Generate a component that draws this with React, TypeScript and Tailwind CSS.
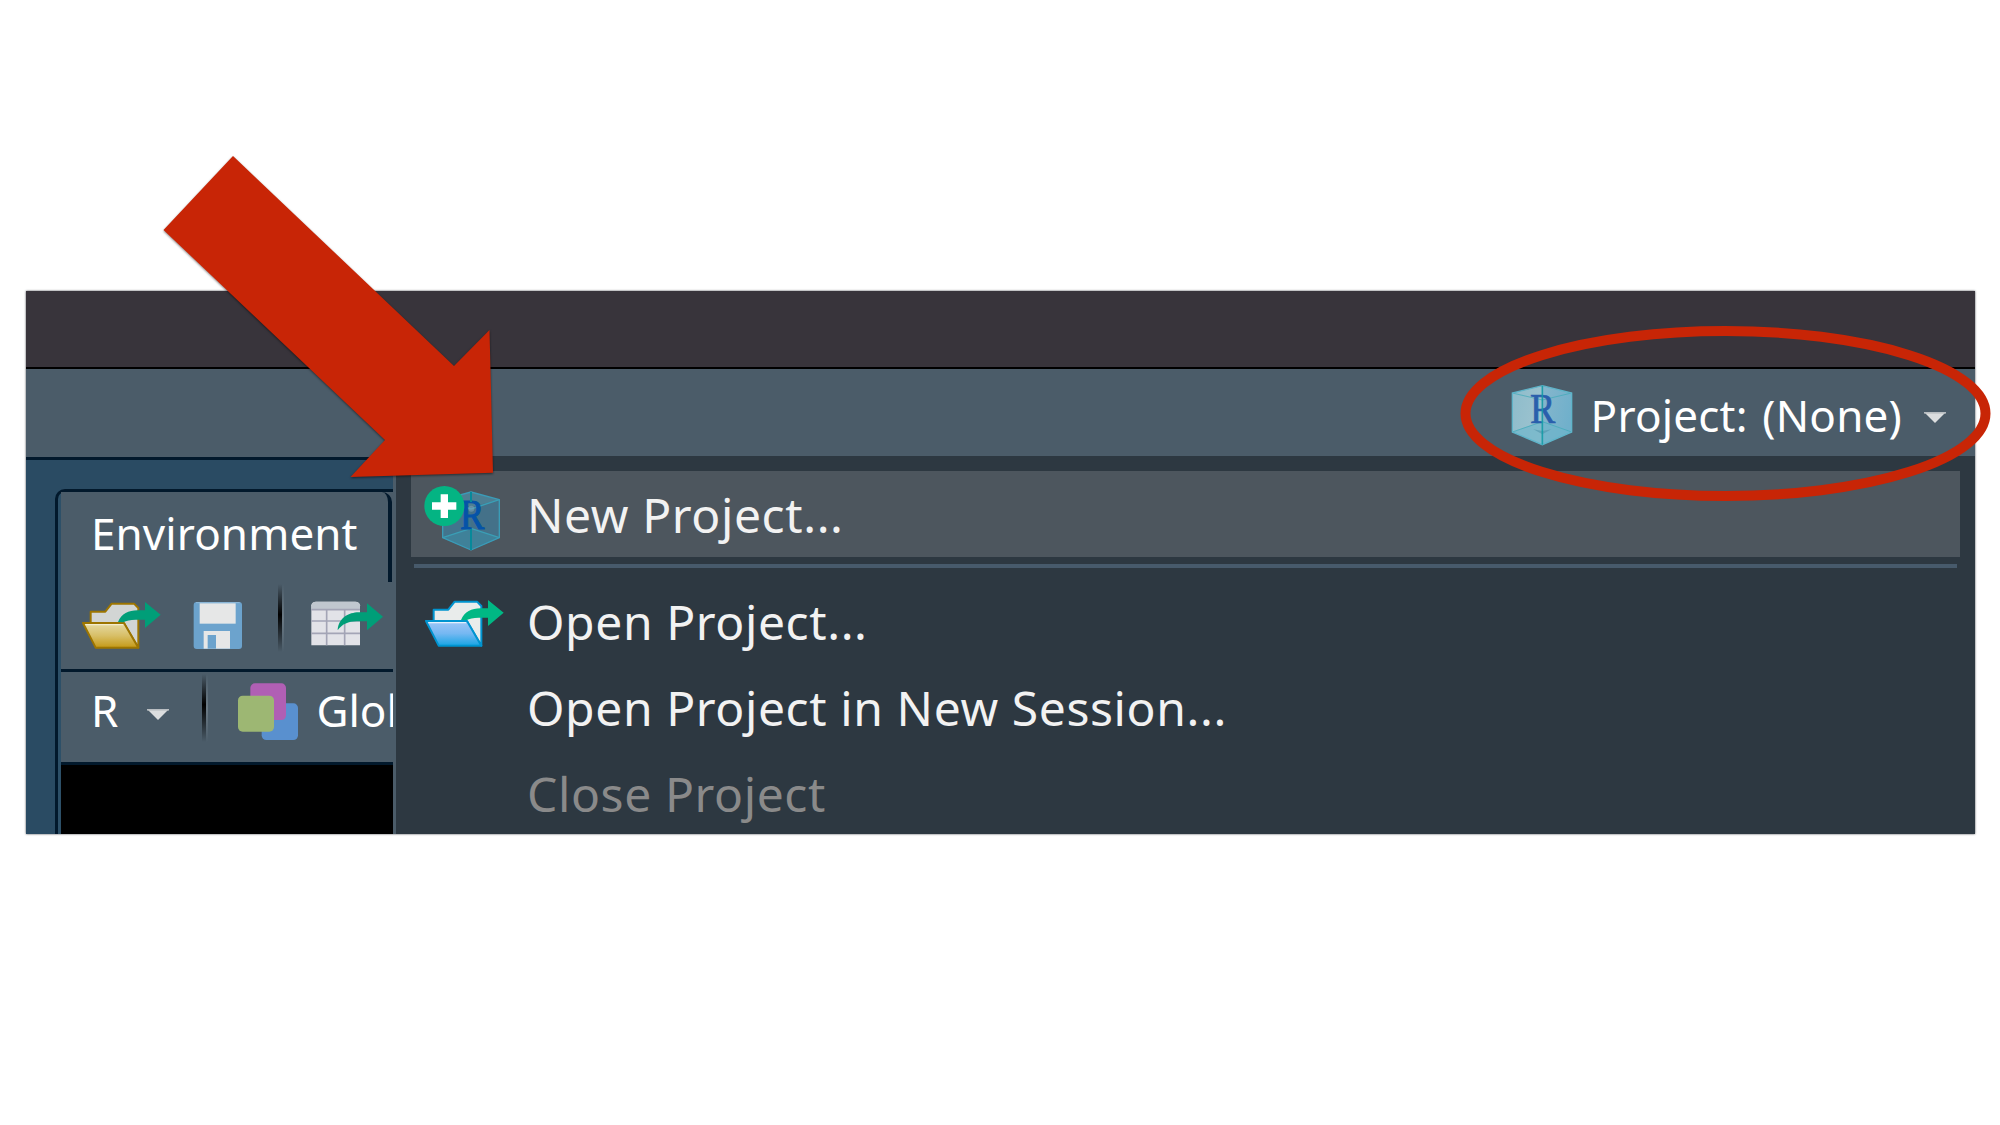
import React from "react";

function FolderOpenIcon({ tone, className }: { tone: "gold" | "blue"; className: string }) {
  const gold = tone === "gold";
  const edge = gold ? "#9d7500" : "#0094d0";
  const paper = gold ? "#d2d5d4" : "#e9eceb";
  const arrow = gold ? "#009e78" : "#00b884";
  const id = `folder-${tone}`;
  return (
    <svg className={className} viewBox="36 60 243 150" fill="none">
      <defs>
        <linearGradient id={id} x1="0" y1="0" x2="0" y2="1">
          <stop offset="0" stopColor={gold ? "#e6dba6" : "#9fc6f7"} />
          <stop offset="0.5" stopColor={gold ? "#d8c069" : "#76b8f2"} />
          <stop offset="1" stopColor={gold ? "#c59a17" : "#18a5e4"} />
        </linearGradient>
      </defs>
      <path d="M65 130V95H109L128 71H195L208 84V203L165 130Z" fill={paper} stroke={edge} strokeWidth="6" strokeLinejoin="round" />
      <path d="M42 129H165L208 203H80Z" fill={`url(#${id})`} stroke={edge} strokeWidth="6" strokeLinejoin="round" />
      <path d="M49 134H162" stroke={gold ? "#f3edcf" : "#e4f1fd"} strokeWidth="4" />
      <path d="M147 126C158 101 178 91 206 91H228V66L275 104L228 144V119H200C184 119 172 122 163 127Z" fill={arrow} />
    </svg>
  );
}

function SaveIcon() {
  return (
    <svg className="-mt-[2px] ml-[30px] h-[50px] w-[51px]" viewBox="366 60 153 150">
      <rect x="371" y="66" width="145" height="141" rx="9" fill="#6ca3cd" />
      <path d="M378 68H509" stroke="#8fb8d8" strokeWidth="3" />
      <rect x="389" y="70" width="108" height="61" fill="#e6e7e7" />
      <rect x="401" y="153" width="79" height="53" fill="#e6e7e7" />
      <rect x="413" y="165" width="25" height="41" fill="#6ca3cd" />
    </svg>
  );
}

function ImportTableIcon() {
  return (
    <svg className="h-[50px] w-[75px]" viewBox="717 60 225 150">
      <path d="M724 196V76Q726 65 738 65H856Q868 65 870 76V196Z" fill="#e2e3e8" />
      <path d="M724 87V76Q726 65 738 65H856Q868 65 870 76V87Z" fill="#c0c7cf" />
      <path d="M724 89H870M724 123H870M724 160H870M770 89V196M824 89V196" stroke="#a3a5b6" strokeWidth="5" />
      <path d="M803 151C806 112 836 98 866 97H891V70L939 110L891 151V124H860C835 124 817 132 803 151Z" fill="#009e78" />
    </svg>
  );
}

function EnvironmentIcon() {
  return (
    <svg className="h-[60px] w-[63px]" viewBox="51 36 189 180">
      <rect x="125" y="100" width="109" height="110" rx="14" fill="#5990cf" />
      <rect x="91" y="40" width="107" height="110" rx="14" fill="#b05fb4" />
      <rect x="54" y="77" width="108" height="108" rx="14" fill="#9db773" />
    </svg>
  );
}

function CubeIcon() {
  return (
    <svg className="mt-[4px] h-[62px] w-[62px]" viewBox="63 44 186 186">
      <defs>
        <linearGradient id="cube-left" x1="0" y1="0" x2="1" y2="0.4">
          <stop offset="0" stopColor="#8dbccb" />
          <stop offset="1" stopColor="#9dc3cf" />
        </linearGradient>
        <linearGradient id="cube-right" x1="0" y1="0" x2="1" y2="0.4">
          <stop offset="0" stopColor="#86b6cc" />
          <stop offset="1" stopColor="#70b0cb" />
        </linearGradient>
      </defs>
      <path d="M157 49L67 71V188L157 226Z" fill="url(#cube-left)" />
      <path d="M157 49L245 71V188L157 226Z" fill="url(#cube-right)" />
      <path d="M67 188L157 155L245 188L157 226Z" fill="#6db5cb" fillOpacity="0.65" />
      <path d="M67 71L157 92L245 71M67 188L157 157L245 188" fill="none" stroke="#3fa9b8" strokeWidth="3" strokeOpacity="0.7" />
      <path d="M157 49L245 71V188L157 226L67 188V71Z" fill="none" stroke="#5fb4c9" strokeWidth="4" />
      <path d="M130 180L157 185L184 180L157 195Z" fill="#4c8fa8" fillOpacity="0.55" />
      <text x="120" y="160" fontFamily="Liberation Serif, serif" fontSize="124" textLength="76" lengthAdjust="spacingAndGlyphs" fill="#2a5fac" stroke="#2a5fac" strokeWidth="2">R</text>
      <path d="M157 49V226" stroke="#109ba6" strokeWidth="5" strokeOpacity="0.85" />
    </svg>
  );
}

function NewProjectIcon() {
  return (
    <svg className="mt-[8px] ml-[1px] h-[66px] w-[78px]" viewBox="42 44 234 198">
      <path d="M183 65L98 88V202L183 239Z" fill="#42748d" />
      <path d="M183 65L268 88V202L183 239Z" fill="#447189" />
      <path d="M98 202L183 174L268 202L183 239Z" fill="#3f8199" />
      <path d="M98 88L183 110L268 88L183 65Z" fill="#4d7f93" />
      <path d="M98 202L183 174L268 202M98 88L183 116L268 88" fill="none" stroke="#3a9fb6" strokeWidth="4" />
      <path d="M183 65L268 88V202L183 239L98 202V88Z" fill="none" stroke="#3a9cb8" strokeWidth="4" strokeLinejoin="round" />
      <text x="150" y="176" fontFamily="Liberation Serif, serif" fontSize="124" textLength="73" lengthAdjust="spacingAndGlyphs" fill="#0553a8" stroke="#0553a8" strokeWidth="3">R</text>
      <path d="M183 65V95M183 176V239" stroke="#07899a" strokeWidth="6" />
      <circle cx="184" cy="115" r="9" fill="#7fa3b8" fillOpacity="0.55" />
      <circle cx="103" cy="107" r="60" fill="#04b483" />
      <path d="M92 72H114V96H139V118H114V143H92V118H66V96H92Z" fill="#fff" />
    </svg>
  );
}

function Caret({ className }: { className: string }) {
  return (
    <svg className={`h-[11px] w-[22px] shrink-0 ${className}`} viewBox="0 0 22 11">
      <path d="M0 0H22L11 11Z" fill="#dcdedf" />
      <path d="M0 0.8H22" stroke="#b9bec2" strokeWidth="1.6" />
    </svg>
  );
}

function Divider({ className }: { className: string }) {
  return (
    <div className={`flex h-[68px] w-[8px] shrink-0 ${className}`}>
      <div className="ml-[2px] h-full w-[4px] bg-gradient-to-b from-transparent from-0% via-black via-45% to-transparent to-100%" />
      <div className="h-full w-[2px] bg-gradient-to-b from-transparent via-[#6b7a85] to-transparent" />
    </div>
  );
}

function MenuItem({ label, icon, className = "" }: { label: string; icon?: React.ReactNode; className?: string }) {
  return (
    <div className={`flex h-[86px] items-center ${className}`}>
      <div className="flex w-[116px] shrink-0 pl-[12px]">{icon}</div>
      <span className="mt-[2px] whitespace-pre text-[48px] leading-[84px] tracking-[0.6px]">{label}</span>
    </div>
  );
}

export default function App() {
  return (
    <div className="relative h-[1125px] w-[2000px] overflow-hidden bg-white pt-[291px] pl-[26px] font-['Noto_Sans',sans-serif] text-white">
      <div className="relative flex h-[543px] w-[1949px] flex-col overflow-hidden bg-[#2a4b63] shadow-[0_0_2px_#454a4f]">
        <div className="h-[76px] shrink-0 bg-[#38343b]" />
        <div className="flex h-[93px] shrink-0 items-center justify-end border-t-[2px] border-b-[3px] border-t-black border-b-[#02192c] bg-[#4b5c69]">
          <CubeIcon />
          <span className="mt-[3px] ml-[18px] whitespace-pre text-[44px] leading-[60px] tracking-[0.2px] [word-spacing:3px]">Project: (None)</span>
          <Caret className="mt-[8px] mr-[29px] ml-[22px]" />
        </div>

        <div className="mt-[29px] ml-[29px] flex h-[346px] w-[338px] shrink-0 flex-col rounded-tl-[10px] border-t-[3px] border-l-[3px] border-[#02192c] bg-[#2d5068] pl-[3px]">
          <div className="h-[90px] shrink-0 bg-[#4b5c69]">
            <div className="flex h-[90px] w-[331px] items-center rounded-tr-[10px] border-r-[4px] border-[#02192c] pl-[30px]">
              <span className="-mt-[8px] text-[44px] leading-[60px] tracking-[0.1px]">Environment</span>
            </div>
          </div>
          <div className="flex h-[90px] shrink-0 items-center border-b-[3px] border-[#02192c] bg-[#4b5c69] pl-[20px]">
            <FolderOpenIcon tone="gold" className="-mt-[2px] h-[50px] w-[81px]" />
            <SaveIcon />
            <Divider className="-mt-[15px] ml-[33px]" />
            <div className="-mt-[2px] ml-[25px]">
              <ImportTableIcon />
            </div>
          </div>
          <div className="flex h-[93px] shrink-0 items-center overflow-hidden border-b-[3px] border-[#02192c] bg-[#4b5c69] pl-[30px]">
            <span className="-mt-[15px] text-[44px] leading-[60px]">R</span>
            <Caret className="-mt-[6px] ml-[29px]" />
            <Divider className="-mt-[18px] ml-[31px]" />
            <div className="-mt-[11px] ml-[29px] shrink-0">
              <EnvironmentIcon />
            </div>
            <span className="-mt-[15px] ml-[16px] text-[44px] leading-[60px]">Glob</span>
          </div>
          <div className="grow bg-black" />
        </div>

        <div className="absolute top-[165px] left-[367px] flex h-[378px] w-[1582px] flex-col overflow-hidden border-l-[3px] border-[#4b5c69] bg-[#2d3841] pt-[15px] pr-[15px] pl-[15px] text-[#f2f2f2]">
          <MenuItem className="shrink-0 bg-[#4d565e]" label="New Project..." icon={<NewProjectIcon />} />
          <div className="mx-[3px] mt-[7px] mb-[10px] h-[4px] shrink-0 bg-[#475a6b]" />
          <MenuItem className="shrink-0" label="Open Project..." icon={<FolderOpenIcon tone="blue" className="mt-[3px] ml-[1px] h-[50px] w-[81px]" />} />
          <MenuItem className="shrink-0" label="Open Project in New Session..." />
          <MenuItem className="shrink-0 text-[#8a8a8a]" label="Close Project" />
        </div>
      </div>

      <svg className="pointer-events-none absolute inset-0 h-[1125px] w-[2000px]" viewBox="0 0 2000 1125">
        <path
          className="drop-shadow-[0_1px_1px_rgba(0,0,0,0.5)]"
          d="M233 156L454 366L489.500 330L493 472.700L350.500 477L385 440L163.500 230Z"
          fill="#c82506"
        />
        <ellipse cx="1725.500" cy="413.500" rx="260" ry="82.500" fill="none" stroke="#c82506" strokeWidth="10" />
      </svg>
    </div>
  );
}
